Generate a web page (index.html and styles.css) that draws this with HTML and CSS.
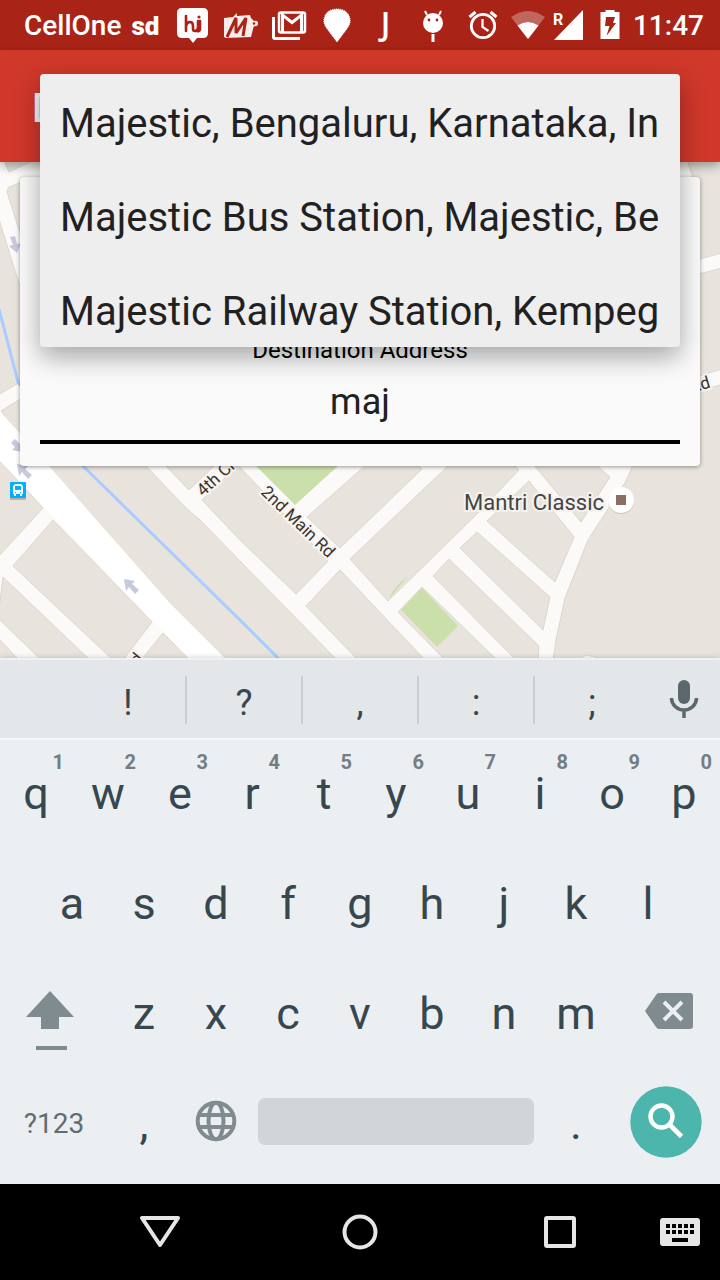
FILE: index.html
```html
<!DOCTYPE html>
<html lang="en">
<head>
<meta charset="utf-8">
<meta name="viewport" content="width=device-width, initial-scale=1">
<title>Destination search</title>
<link rel="stylesheet" href="styles.css">
</head>
<body>
<header class="status">
  <span class="carrier">CellOne</span>
  <div class="notifications">
    <span class="slot sd">sd</span>
    <svg class="slot" viewBox="0 0 48 48"><path fill="#fff" d="M13 7h21q5 0 5 5v20q0 5-5 5h-6l-4 5-4-5h-7q-5 0-5-5V12q0-5 5-5z"/><path fill="none" stroke="#a92417" stroke-width="2.6" stroke-linecap="round" d="M17 15v15M17 25q1-4 4-4t3 4v3q0 2 2 2t3-3v-7M31 20v8q0 3-3 2"/><circle cx="30" cy="16" r="1.6" fill="#a92417"/></svg>
    <svg class="slot" viewBox="0 0 48 48"><path fill="#fff" opacity=".92" d="M7 17l9-1 4-4v3l13-1 1 3 3 3q4-1 4 2.500t-4 2.500l-1 3-2 8-25 1-2-1z"/><path fill="none" stroke="#a92417" stroke-width="3" stroke-linejoin="bevel" d="M10 36l9-19 0 15 10-15-3 18"/><circle cx="37" cy="22.500" r="1.300" fill="#a92417"/></svg>
    <svg class="slot" viewBox="0 0 48 48"><path fill="none" stroke="#fff" stroke-width="3" d="M8.500 16v20q0 1.500 1.500 1.500h25"/><rect x="14" y="11.500" width="26" height="20" rx="2" fill="none" stroke="#fff" stroke-width="2.500"/><path fill="none" stroke="#fff" stroke-width="3" d="M17.500 31V14l9.500 7.500 9.500-7.500v17"/></svg>
    <svg class="slot" viewBox="0 0 48 48"><path fill="#fff" stroke="#fff" stroke-dasharray="1 1" d="M24 41l-9-12q-5-6-4-11 2-10 13-10t13 10q1 5-4 11z"/></svg>
    <span class="slot letter-j">J</span>
    <svg class="slot" viewBox="0 0 48 48"><circle cx="24" cy="22" r="10" fill="#fff"/><path stroke="#fff" stroke-width="2" d="M18 14l-2-4M30 14l2-4"/><path stroke="#fff" stroke-width="3" d="M24 33v8"/><circle cx="20" cy="19" r="1.400" fill="#a92417"/><circle cx="28" cy="19" r="1.400" fill="#a92417"/></svg>
  </div>
  <div class="system">
    <svg class="clock" viewBox="0 0 48 48"><circle cx="24" cy="25" r="11.700" fill="none" stroke="#fff" stroke-width="2.800"/><path fill="none" stroke="#fff" stroke-width="2.300" d="M23.500 18v8l6 4"/><path stroke="#fff" stroke-width="3" d="M10.500 16l6-5M37.500 16l-6-5"/></svg>
    <svg class="wifi" viewBox="0 0 42 48"><path fill="#fff" opacity=".3" d="M21 38L4 16q17-12 34 0z"/><path fill="#fff" d="M21 38L10.500 24.500q10.500-7 21 0z"/></svg>
    <svg class="signal" viewBox="0 0 38 48"><path fill="#fff" d="M5 39h29V9z"/><text class="roaming" x="4" y="24">R</text></svg>
    <svg class="battery" viewBox="0 0 44 48"><path fill="#fff" d="M12.500 11h5V9h9v2h5v27h-19z"/><path fill="#a92417" d="M18 16h9l-2 6h3L18.500 35l3-10H17z"/></svg>
    <time class="time">11:47</time>
  </div>
</header>

<main class="screen">
  <div class="appbar"><h1 class="title">D</h1></div>
  <section class="map">
    <svg class="map-art" viewBox="0 162 720 496" preserveAspectRatio="xMidYMid slice" role="img" aria-label="Street map">
      <rect x="0" y="162" width="720" height="496" fill="#fbfaf8"/>
      <g fill="#e8e4dd" stroke="#dcd7cc">
        <path d="M-2 459L43 508-2 557z"/>
        <path d="M53 520l99 102-29 38h-10L13 566z"/>
        <path d="M3 577l87 83H41L-2 618z"/>
        <path d="M-2 638l21 22H-2z"/>
        <path d="M163 633l27 27h-49z"/>
        <path d="M48 465h97l40 42 15 13 40 41 97 99H227l-58-58z"/>
        <path d="M165 465h50l-26 25z"/>
        <path d="M202 500l36-35 90 96-32 33-56-54z"/>
        <path d="M306 606l34-36 85 90h-67z"/>
        <path d="M307 517l59-52h52l4 4-82 79z"/>
        <path d="M350 559l99-94h65l5 5-40 42-91 89z"/>
        <path d="M398 612l24-25 75 73h-52z"/>
        <path d="M433 576l16-17 90 87-1 14h-22z"/>
        <path d="M460 548l17-16 73 65-7 33z"/>
        <path d="M487 521l42-40 45 56-19 45z"/>
        <path d="M534 465h62l14 12-29 45z"/>
        <path d="M633 465l-7 16-38 59-23 58-9 42-3 20h24l9-5 18 4h120V384l-40 11z"/>
        <path d="M680 279l42-11v101l-42 13z"/>
        <path d="M687 160l5 15v86l30-8v-93z"/>
        <path d="M-2 216l24 77v88L-2 395z"/>
        <path d="M1 411l21-13v39z"/>
        <path d="M4 160l5 12 25-12z"/>
        <path d="M9 187l13-5v57L7 192q0-3 2-5z"/>
      </g>
      <path fill="#cbdfab" d="M255 465h84l-44 40zM401 610l21-22 36 38-21 21zM389 599q5-13 19-23z"/>
      <path fill="#fff" d="M0 411l50 56 119 135 58 58h-37L0 461z"/>
      <path fill="none" stroke="#aaccff" stroke-width="3" d="M-1 309l19 73 65 84 157 154 40 40"/>
      <g fill="#c7c9dd">
        <path id="arrow" d="M124 579l11 2-3 3 7 6-4 4-6-7-3 4z"/>
        <use href="#arrow" x="-107" y="-115"/>
        <path d="M23 452l-11-2 3-3-4-4 4-4 5 5 3-4z"/>
        <path d="M17 253l-8-7 4-1-3-8 5-1 2 8 4-1z"/>
      </g>
      <rect x="10" y="484" width="16" height="16" rx="1" fill="#b6b2aa"/>
      <rect x="10" y="482" width="16" height="16" rx="1" fill="#00b0ff"/>
      <path fill="#fff" fill-rule="evenodd" d="M15 484h6l2 2v8h-1v2h-2v-2h-4v2h-2v-2h-1v-8zM15 486v4h6v-4zM15 492v1h1v-1zM20 492v1h1v-1z"/>
      <g class="street">
        <text transform="translate(203 497) rotate(-42)">4th Cross</text>
        <text transform="translate(260 493) rotate(44)">2nd Main Rd</text>
        <text transform="translate(692 393) rotate(-17)">Rd</text>
        <text transform="translate(144 659) rotate(-50)" text-anchor="end">Rd</text>
      </g>
      <text class="place" x="464" y="510">Mantri Classic</text>
      <circle cx="621" cy="501" r="13" fill="#c9c5bd"/>
      <circle cx="621" cy="500" r="13" fill="#fff"/>
      <rect x="616" y="495" width="10" height="10" fill="#8d6e63"/>
    </svg>
    <form class="card">
      <label class="label" for="destination">Destination Address</label>
      <input class="field" id="destination" type="text" value="maj">
    </form>
  </section>
  <ul class="popup">
    <li><button class="option" type="button">Majestic, Bengaluru, Karnataka, India</button></li>
    <li><button class="option" type="button">Majestic Bus Station, Majestic, Bengaluru</button></li>
    <li><button class="option" type="button">Majestic Railway Station, Kempegowda</button></li>
  </ul>
</main>

<section class="keyboard">
  <div class="suggestions">
    <button class="suggestion first" type="button">!</button>
    <button class="suggestion" type="button">?</button>
    <button class="suggestion" type="button">,</button>
    <button class="suggestion" type="button">:</button>
    <button class="suggestion" type="button">;</button>
    <button class="mic" type="button" aria-label="Voice input"><svg width="32" height="40" viewBox="0 0 32 40"><rect x="10" y="1" width="12" height="24" rx="6" fill="#5b686e"/><path fill="none" stroke="#5b686e" stroke-width="3.500" d="M3.500 19a12.500 12 0 0 0 25 0M16 31v8"/></svg></button>
  </div>
  <div class="keys">
    <div class="row">
      <button class="key" type="button">q<span class="hint">1</span></button>
      <button class="key" type="button">w<span class="hint">2</span></button>
      <button class="key" type="button">e<span class="hint">3</span></button>
      <button class="key" type="button">r<span class="hint">4</span></button>
      <button class="key" type="button">t<span class="hint">5</span></button>
      <button class="key" type="button">y<span class="hint">6</span></button>
      <button class="key" type="button">u<span class="hint">7</span></button>
      <button class="key" type="button">i<span class="hint">8</span></button>
      <button class="key" type="button">o<span class="hint">9</span></button>
      <button class="key" type="button">p<span class="hint">0</span></button>
    </div>
    <div class="row">
      <button class="key inset" type="button">a</button>
      <button class="key" type="button">s</button>
      <button class="key" type="button">d</button>
      <button class="key" type="button">f</button>
      <button class="key" type="button">g</button>
      <button class="key" type="button">h</button>
      <button class="key" type="button">j</button>
      <button class="key" type="button">k</button>
      <button class="key" type="button">l</button>
    </div>
    <div class="row">
      <button class="key wide shift" type="button" aria-label="Shift"><svg width="48" height="60" viewBox="0 0 48 60"><path fill="#808b8f" d="M24 0l24 26H33v12H15V26H0zM10 55h31v4H10z"/></svg></button>
      <button class="key" type="button">z</button>
      <button class="key" type="button">x</button>
      <button class="key" type="button">c</button>
      <button class="key" type="button">v</button>
      <button class="key" type="button">b</button>
      <button class="key" type="button">n</button>
      <button class="key" type="button">m</button>
      <button class="key wide erase" type="button" aria-label="Delete"><svg width="48" height="36" viewBox="0 0 48 36"><path fill="#808b8f" d="M14 0h31q3 0 3 3v30q0 3-3 3H14q-2 0-3-2L0 18 11 2q1-2 3-2z"/><path stroke="#ebeff2" stroke-width="4" d="M19 9l18 18M37 9L19 27"/></svg></button>
    </div>
    <div class="row">
      <button class="key wide symbols" type="button">?123</button>
      <button class="key" type="button">,</button>
      <button class="key globe" type="button" aria-label="Change language"><svg width="42" height="42" viewBox="0 0 42 42"><g fill="none" stroke="#808b8f" stroke-width="4"><circle cx="21" cy="21" r="18.300"/><ellipse cx="21" cy="21" rx="7.500" ry="18.300"/><path d="M4 15h34M4 27h34"/></g></svg></button>
      <button class="key space" type="button" aria-label="Space"><span class="space-bar"></span></button>
      <button class="key" type="button">.</button>
      <button class="key wide search" type="button" aria-label="Search"><svg width="72" height="72" viewBox="0 0 72 72"><circle cx="36" cy="36" r="35.700" fill="#4db6ac"/><circle cx="31.500" cy="30.500" r="11" fill="none" stroke="#fff" stroke-width="4.400"/><path stroke="#fff" stroke-width="4.600" d="M39.500 38.500l12 12"/></svg></button>
    </div>
  </div>
</section>

<nav class="navbar">
  <button class="nav-button back" type="button" aria-label="Back"><svg width="42" height="34" viewBox="0 0 42 34"><path fill="none" stroke="#e6e6e6" stroke-width="4" stroke-linejoin="round" d="M3 3h36L21 30z"/></svg></button>
  <button class="nav-button" type="button" aria-label="Home"><svg width="36" height="36" viewBox="0 0 36 36"><circle cx="18" cy="18" r="15.500" fill="none" stroke="#e6e6e6" stroke-width="4"/></svg></button>
  <button class="nav-button" type="button" aria-label="Recent apps"><svg width="32" height="32" viewBox="0 0 32 32"><rect x="2" y="2" width="28" height="28" rx="1" fill="none" stroke="#e6e6e6" stroke-width="4"/></svg></button>
  <button class="nav-button switcher" type="button" aria-label="Choose keyboard"><svg width="40" height="28" viewBox="0 0 40 28"><rect width="40" height="28" rx="3" fill="#e6e6e6"/><path d="M6 6h4v4H6zM12 6h4v4h-4zM18 6h4v4h-4zM24 6h4v4h-4zM30 6h4v4h-4zM6 12h4v4H6zM12 12h4v4h-4zM18 12h4v4h-4zM24 12h4v4h-4zM30 12h4v4h-4zM12 20h16v4H12z"/></svg></button>
</nav>
</body>
</html>
```
FILE: styles.css
```css
* {
  box-sizing: border-box;
}

body {
  margin: 0;
  min-height: 100vh;
  display: flex;
  flex-direction: column;
  background: #000;
  font-family: Roboto, "Noto Sans", sans-serif;
}

button {
  margin: 0;
  padding: 0;
  border: 0;
  background: none;
  color: inherit;
  font: inherit;
}

svg {
  display: block;
}

.status {
  display: flex;
  align-items: center;
  height: 50px;
  padding: 0 16px 0 24px;
  background: #a92417;
  color: #fff;
  font-size: 28px;
  font-weight: 500;
}

.carrier {
  flex: 0 0 97px;
}

.notifications,
.system {
  display: flex;
  align-items: center;
}

.system {
  margin-left: auto;
}

.slot {
  width: 48px;
  height: 48px;
  line-height: 50px;
  text-align: center;
}

.sd {
  font-size: 26px;
  font-weight: 900;
}

.letter-j {
  font-family: "Open Sans", sans-serif;
  font-size: 32px;
  font-weight: 600;
  line-height: 44px;
}

.clock {
  width: 48px;
  height: 48px;
}

.wifi {
  width: 42px;
  height: 48px;
}

.signal {
  width: 38px;
  height: 48px;
}

.battery {
  width: 46px;
  height: 48px;
}

.roaming {
  fill: #fff;
  font-size: 16px;
  font-weight: 700;
}

.screen {
  position: relative;
  flex: 1;
  display: flex;
  flex-direction: column;
}

.appbar {
  position: relative;
  z-index: 1;
  display: flex;
  align-items: center;
  height: 112px;
  padding: 4px 32px 0;
  background: #d0382a;
  box-shadow: 0 4px 10px rgba(0, 0, 0, 0.35);
}

.title {
  margin: 0;
  color: #f4f4f4;
  font-size: 40px;
  font-weight: 500;
}

.map {
  position: relative;
  flex: 1;
  padding: 15px 20px 192px;
  overflow: hidden;
}

.map-art {
  position: absolute;
  inset: 0;
  width: 100%;
  height: 100%;
}

.street {
  fill: #3b332c;
  stroke: #f7f5f1;
  stroke-width: 4px;
  paint-order: stroke;
  font-size: 17px;
}

.place {
  fill: #444;
  stroke: #f4f2ee;
  stroke-width: 4px;
  paint-order: stroke;
  font-size: 22px;
}

.card {
  position: relative;
  display: flex;
  flex-direction: column;
  padding: 159px 20px 22px;
  border-radius: 4px;
  background: #fafafa;
  box-shadow: 0 1px 4px rgba(0, 0, 0, 0.4);
}

.label {
  padding-top: 1px;
  color: #000;
  font-size: 24px;
  line-height: 27px;
  text-align: center;
}

.field {
  width: 100%;
  height: 80px;
  padding: 0;
  border: 0;
  border-bottom: 4px solid #000;
  border-radius: 0;
  outline: 0;
  background: none;
  color: #212121;
  font-family: inherit;
  font-size: 36px;
  text-align: center;
}

.popup {
  position: absolute;
  z-index: 2;
  top: 24px;
  left: 40px;
  right: 40px;
  height: 273px;
  margin: 0;
  padding: 0 20px;
  overflow: hidden;
  border-radius: 4px;
  background: #eee;
  box-shadow: 0 10px 26px rgba(0, 0, 0, 0.34);
  list-style: none;
}

.option {
  display: block;
  width: 100%;
  height: 94px;
  padding-top: 4px;
  overflow: hidden;
  color: #212121;
  font-size: 40px;
  text-align: left;
  white-space: nowrap;
}

.keyboard {
  position: relative;
  background: #ebeff2;
  color: #37474f;
  box-shadow: 0 0 6px rgba(0, 0, 0, 0.2);
}

.suggestions {
  display: grid;
  grid-template-columns: 71fr repeat(5, 116fr) 69fr;
  align-items: center;
  height: 82px;
  padding-top: 2px;
  border-top: 2px solid #eff2f3;
  border-bottom: 2px solid #f6f8f9;
  background: #e3e7ea;
}

.suggestion {
  height: 48px;
  padding-top: 6px;
  border-right: 2px solid #c9cdd0;
  font-size: 36px;
  line-height: 42px;
}

.first {
  grid-column: 2;
}

.suggestion:nth-child(5) {
  border-right-color: transparent;
}

.mic {
  justify-self: center;
  padding: 0 4px 2px 0;
}

.keys {
  padding-bottom: 4px;
}

.row {
  display: grid;
  grid-template-columns: repeat(20, 1fr);
  height: 110px;
}

.key {
  position: relative;
  grid-column: span 2;
  display: flex;
  align-items: center;
  justify-content: center;
  padding-bottom: 4px;
  font-size: 45px;
}

.hint {
  position: absolute;
  top: 10px;
  right: 8px;
  color: #737e84;
  font-size: 20px;
  font-weight: 700;
  line-height: 24px;
}

.inset {
  grid-column: 2 / span 2;
}

.wide {
  grid-column: span 3;
}

.shift {
  padding: 12px 8px 0 0;
}

.erase {
  padding: 0 0 8px 6px;
}

.symbols {
  color: #5f6c72;
  font-size: 28px;
}

.globe {
  padding-bottom: 8px;
}

.search {
  padding-bottom: 6px;
}

.space {
  grid-column: span 8;
  padding: 0 6px 8px;
}

.space-bar {
  width: 100%;
  height: 47px;
  border-radius: 7px;
  background: #d0d5d8;
}

.navbar {
  display: grid;
  grid-template-columns: 3fr repeat(3, 10fr) 3fr;
  height: 96px;
  background: #000;
}

.nav-button {
  display: flex;
  align-items: center;
  justify-content: center;
}

.back {
  grid-column: 2;
}

.switcher {
  padding-right: 20px;
}
```
